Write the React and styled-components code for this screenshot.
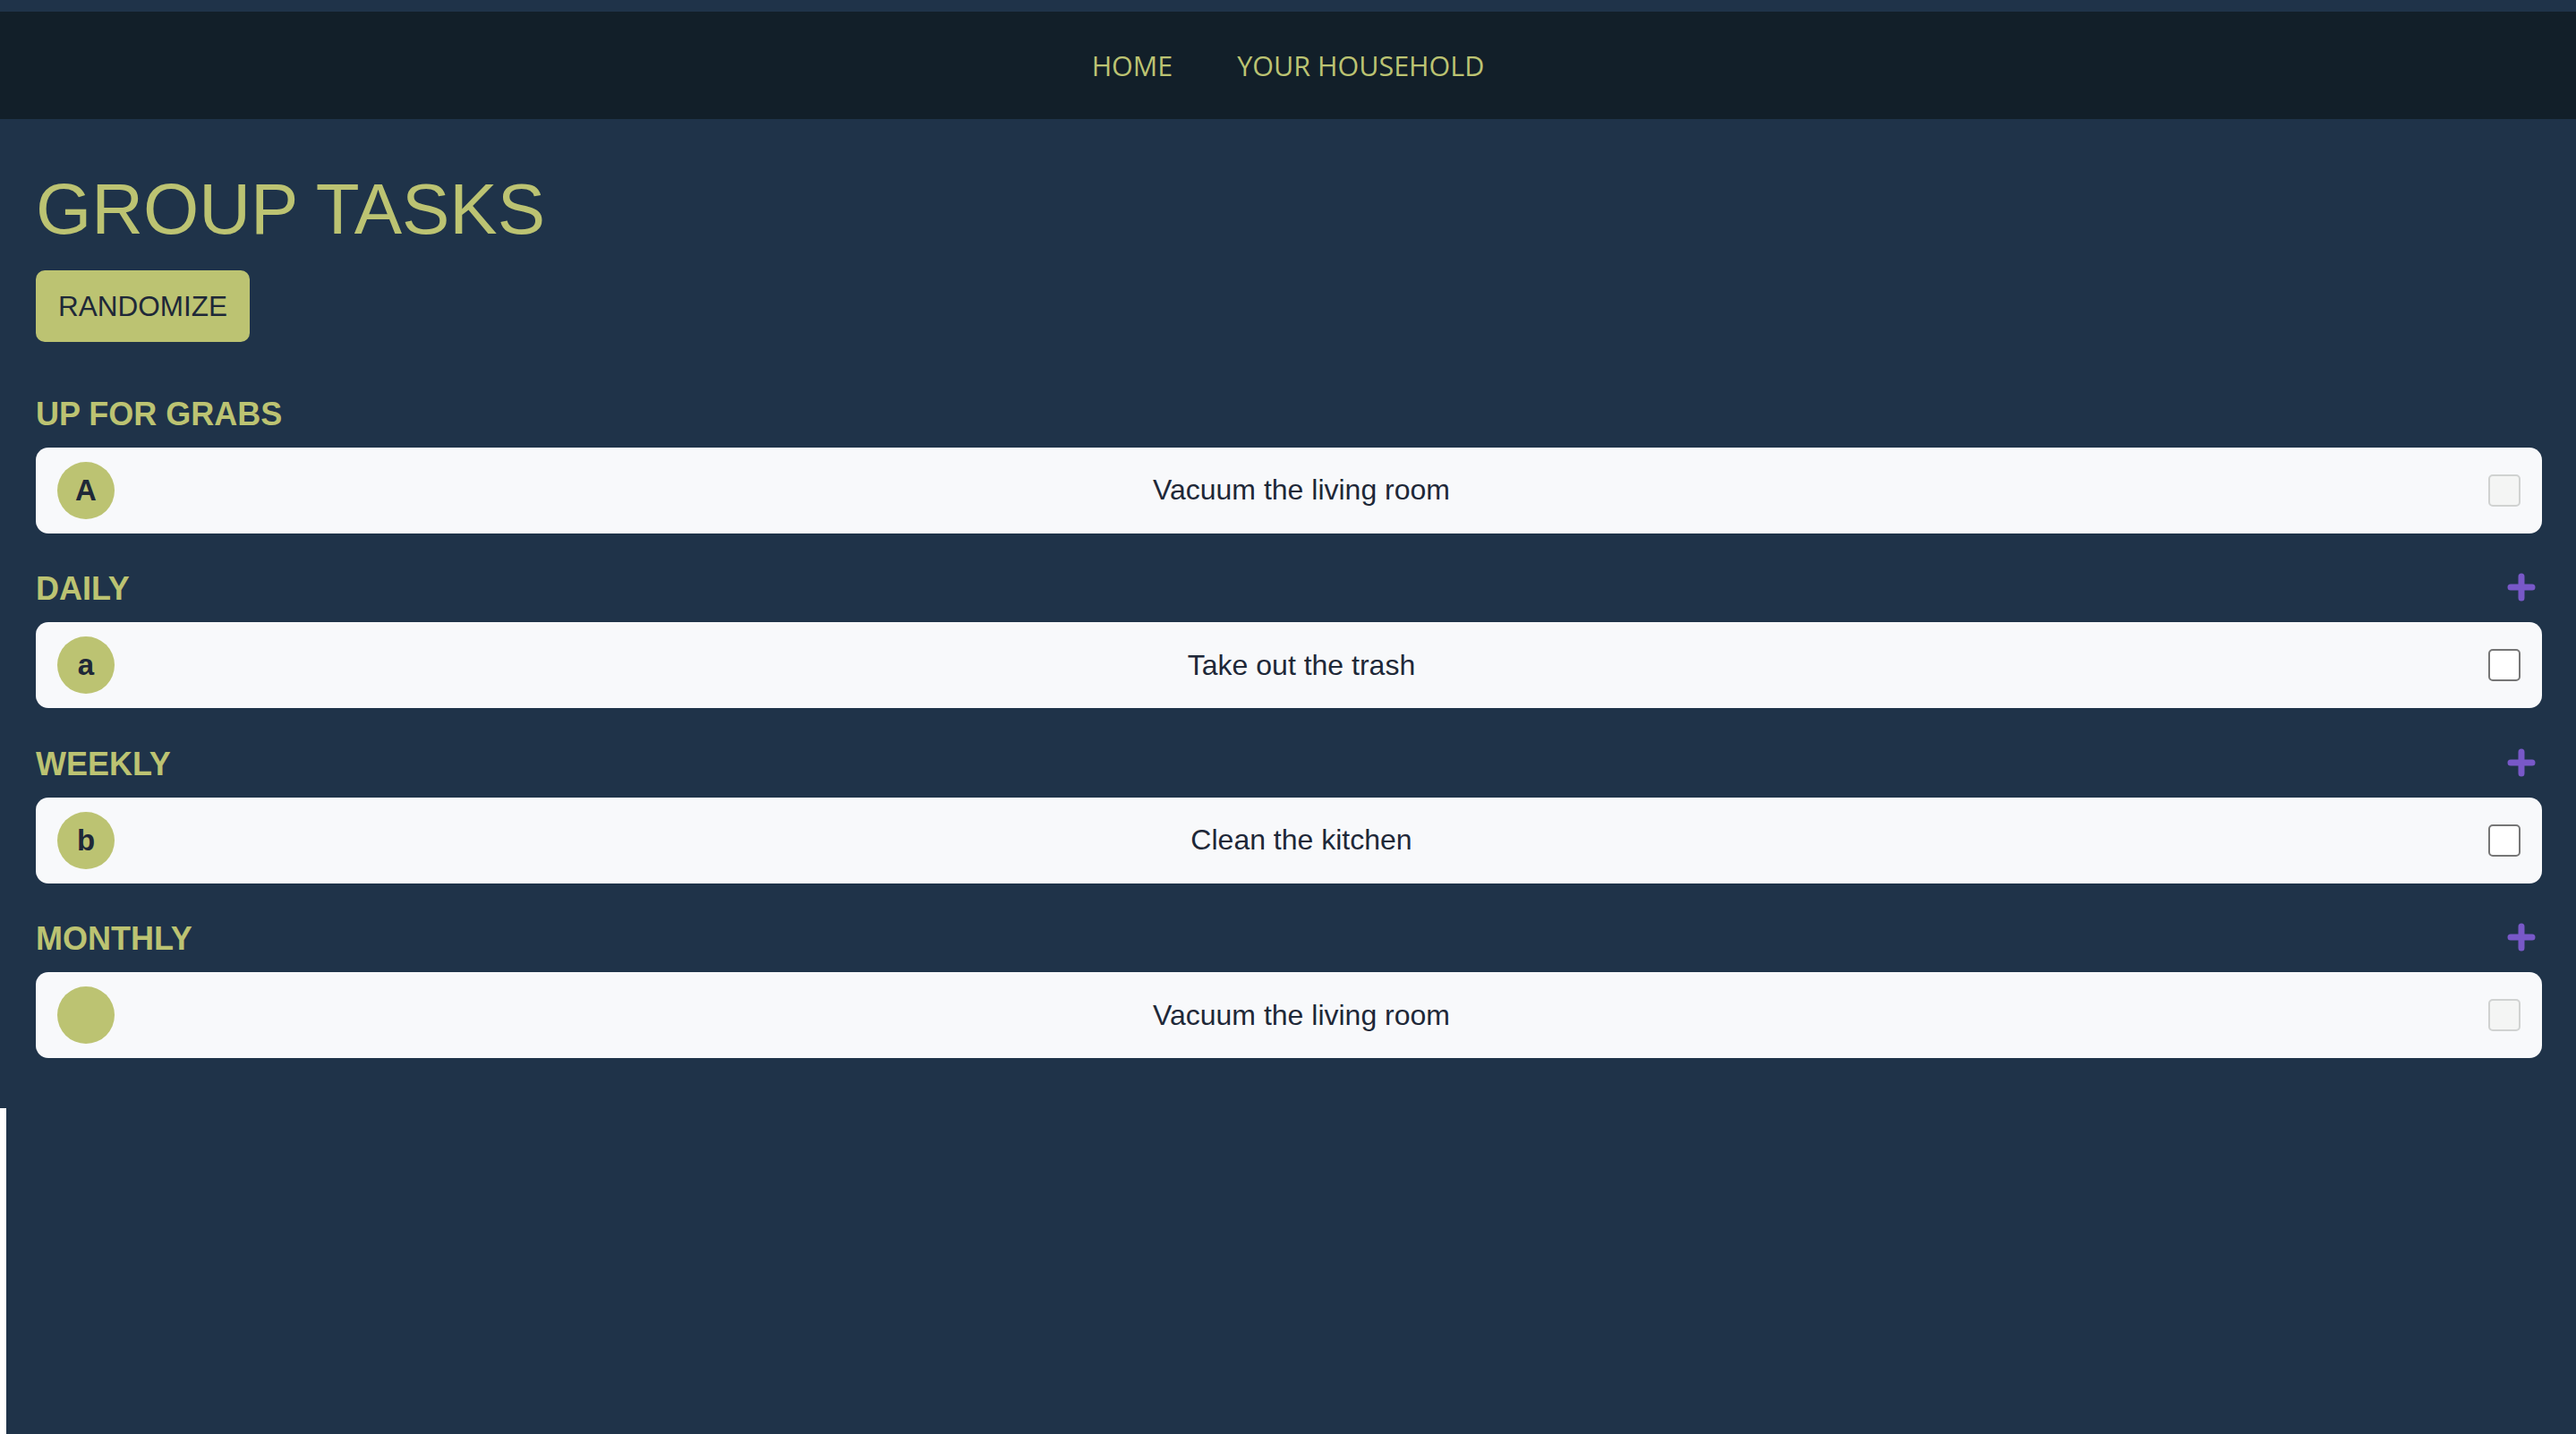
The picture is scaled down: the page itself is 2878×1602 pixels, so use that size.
import React, { useState } from 'react'
import styled, { createGlobalStyle } from 'styled-components'

const GlobalStyle = createGlobalStyle`
  html, body {
    margin: 0;
    padding: 0;
    background: #ffffff;
  }
  body {
    font-family: "Liberation Sans", Arial, sans-serif;
  }
  * {
    box-sizing: border-box;
  }
`

const colors = {
  page: '#1f3349',
  nav: '#121f29',
  accent: '#bcc372',
  card: '#f8f9fb',
  ink: '#1e2838',
  purple: '#7858c8',
}

const Shell = styled.div`
  min-height: 100vh;
  display: flex;
  flex-direction: column;
`

const Main = styled.div`
  background: ${colors.page};
  padding: 13px 0 56px;
`

const Filler = styled.div`
  flex: 1;
  margin-left: 7px;
  background: ${colors.page};
`

const NavBar = styled.nav`
  height: 120px;
  background: ${colors.nav};
  display: flex;
  align-items: center;
  justify-content: center;
  gap: 72px;
`

const NavLink = styled.a`
  font-family: "Open Sans", sans-serif;
  font-size: 30.5px;
  color: ${colors.accent};
  text-decoration: none;
  cursor: pointer;
`

const Content = styled.main`
  padding: 0 38px 0 40px;
`

const Title = styled.h1`
  margin: 55px 0 0;
  font-size: 80px;
  font-weight: 400;
  line-height: normal;
  color: ${colors.accent};
`

const RandomButton = styled.button`
  margin-top: 22px;
  height: 80px;
  padding: 0 25px;
  border: none;
  border-radius: 10px;
  background: ${colors.accent};
  color: ${colors.ink};
  font-family: "Liberation Sans", Arial, sans-serif;
  font-size: 31.5px;
  cursor: pointer;
`

const Section = styled.section`
  margin-top: ${props => (props.$first ? '58px' : '40px')};
`

const LabelRow = styled.div`
  display: flex;
  align-items: center;
  justify-content: space-between;
  height: 41.5px;
  margin-bottom: 18px;
`

const Label = styled.h2`
  margin: 0;
  padding-top: 4px;
  font-size: 36px;
  font-weight: 700;
  color: ${colors.accent};
`

const AddButton = styled.button`
  display: flex;
  padding: 0;
  margin-right: 7px;
  border: none;
  background: none;
  cursor: pointer;
`

const TaskCard = styled.div`
  display: flex;
  align-items: center;
  height: 96px;
  padding: 0 24px;
  border-radius: 14px;
  background: ${colors.card};
`

const Avatar = styled.div`
  width: 64px;
  height: 64px;
  flex-shrink: 0;
  border-radius: 50%;
  background: ${colors.accent};
  color: ${colors.ink};
  display: flex;
  align-items: center;
  justify-content: center;
  font-size: 33px;
  font-weight: 700;
`

const TaskName = styled.div`
  flex: 1;
  text-align: center;
  font-size: 32px;
  color: ${colors.ink};
`

const Check = styled.input`
  appearance: none;
  margin: 0;
  width: 36px;
  height: 36px;
  flex-shrink: 0;
  border-radius: 5px;
  border: 2px solid ${props => (props.disabled ? '#d0d2d1' : '#767676')};
  background: ${props => (props.disabled ? '#f4f5f4' : '#ffffff')};
  cursor: ${props => (props.disabled ? 'default' : 'pointer')};

  &:checked {
    background: ${colors.purple};
    border-color: ${colors.purple};
  }
`

const PlusIcon = () => (
  <svg width="32" height="32" viewBox="0 0 32 32" fill="none">
    <path
      d="M4 16H28M16 4V28"
      stroke={colors.purple}
      strokeWidth="7"
      strokeLinecap="round"
    />
  </svg>
)

const groups = [
  {
    title: 'UP FOR GRABS',
    canAdd: false,
    tasks: [{ id: 1, who: 'A', name: 'Vacuum the living room', locked: true }],
  },
  {
    title: 'DAILY',
    canAdd: true,
    tasks: [{ id: 2, who: 'a', name: 'Take out the trash', locked: false }],
  },
  {
    title: 'WEEKLY',
    canAdd: true,
    tasks: [{ id: 3, who: 'b', name: 'Clean the kitchen', locked: false }],
  },
  {
    title: 'MONTHLY',
    canAdd: true,
    tasks: [{ id: 4, who: '', name: 'Vacuum the living room', locked: true }],
  },
]

const App = () => {
  const [done, setDone] = useState({})

  const toggle = id => {
    setDone(prev => ({ ...prev, [id]: !prev[id] }))
  }

  return (
    <Shell>
      <GlobalStyle />
      <Main>
        <NavBar>
          <NavLink>HOME</NavLink>
          <NavLink>YOUR HOUSEHOLD</NavLink>
        </NavBar>
        <Content>
          <Title>GROUP TASKS</Title>
          <RandomButton>RANDOMIZE</RandomButton>
          {groups.map((group, i) => (
            <Section key={group.title} $first={i === 0}>
              <LabelRow>
                <Label>{group.title}</Label>
                {group.canAdd && (
                  <AddButton aria-label="Add task">
                    <PlusIcon />
                  </AddButton>
                )}
              </LabelRow>
              {group.tasks.map(task => (
                <TaskCard key={task.id}>
                  <Avatar>{task.who}</Avatar>
                  <TaskName>{task.name}</TaskName>
                  <Check
                    type="checkbox"
                    disabled={task.locked}
                    checked={!!done[task.id]}
                    onChange={() => toggle(task.id)}
                  />
                </TaskCard>
              ))}
            </Section>
          ))}
        </Content>
      </Main>
      <Filler />
    </Shell>
  )
}

export default App
